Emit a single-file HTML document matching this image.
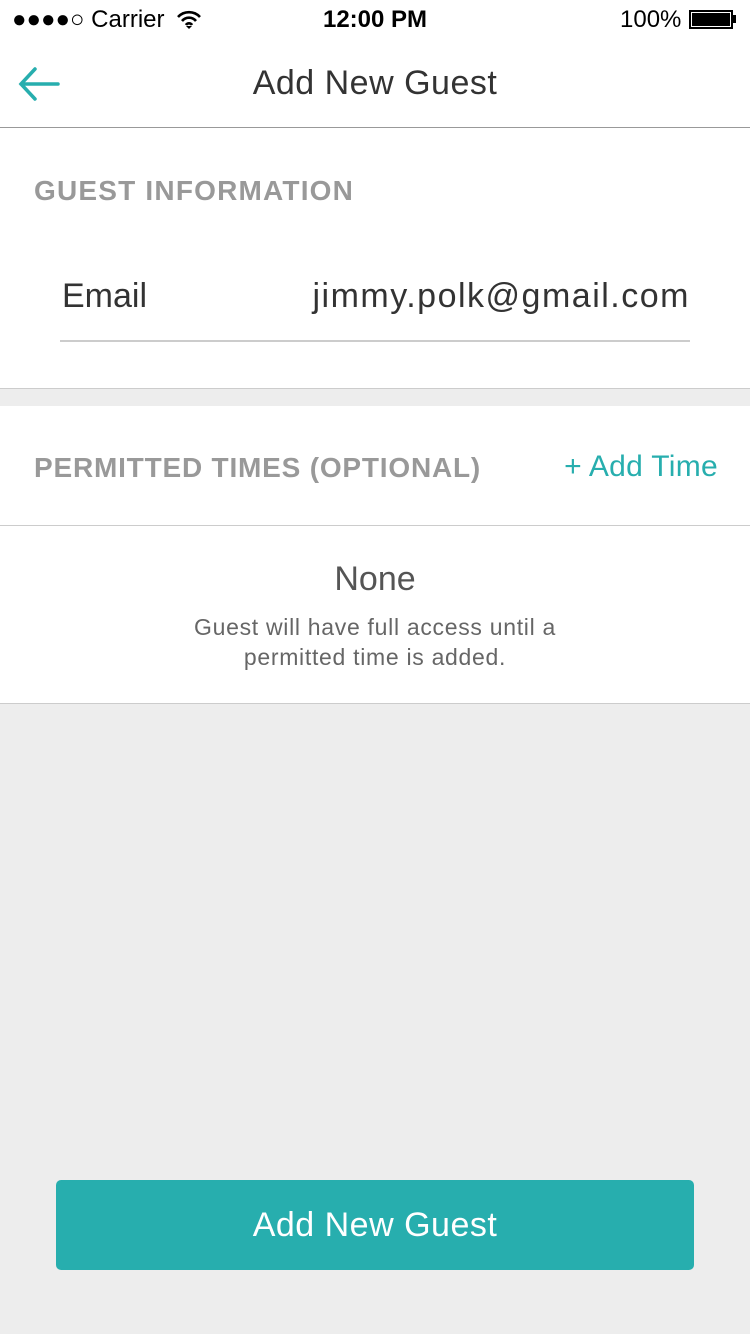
<!DOCTYPE html>
<html><head><meta charset="utf-8"><style>
body{margin:0;width:750px;height:1334px;background:#ededed;font-family:"Liberation Sans",sans-serif;position:relative;overflow:hidden}
.a{position:absolute}
</style></head><body>
<div class="a" style="left:0;top:0;width:750px;height:128px;background:#fff"></div>
<div class="a" style="left:12px;top:6px;font-size:24px;color:#000">●●●●○ Carrier</div>
<svg class="a" style="left:176px;top:10px" width="26" height="20" viewBox="0 0 26 20"><path d="M2 7a15 15 0 0 1 22 0M6 11a9 9 0 0 1 14 0M10 15a3.5 3.5 0 0 1 6 0" stroke="#000" stroke-width="2.6" fill="none"/><path d="M13 19l-3-3h6z"/></svg>
<div class="a" style="left:0;width:750px;top:6px;text-align:center;font-size:24px;font-weight:bold">12:00 PM</div>
<div class="a" style="left:620px;top:6px;font-size:24px">100%</div>
<div class="a" style="left:689px;top:10px;width:42px;height:17px;background:#000;border:1px solid #000;outline:1px solid #fff;outline-offset:-3px"></div>
<div class="a" style="left:733px;top:15px;width:3px;height:8px;background:#000"></div>
<svg class="a" style="left:18px;top:66px" width="42" height="36" viewBox="0 0 42 36"><path d="M40 18H3M17 3L3 18l14 15" stroke="#27aeae" stroke-width="3.5" fill="none" stroke-linecap="round"/></svg>
<div class="a" style="left:0;width:750px;top:64px;text-align:center;font-size:34px;color:#333;letter-spacing:0.5px">Add New Guest</div>
<div class="a" style="left:0;top:127px;width:750px;height:1px;background:#999"></div>
<div class="a" style="left:0;top:128px;width:750px;height:260px;background:#fff;border-bottom:1px solid #ccc"></div>
<div class="a" style="left:34px;top:175px;font-size:28px;font-weight:bold;color:#999;letter-spacing:1.2px">GUEST INFORMATION</div>
<div class="a" style="left:62px;top:277px;font-size:34px;color:#333">Email</div>
<div class="a" style="right:60px;top:277px;font-size:34px;color:#333;letter-spacing:1.5px">jimmy.polk@gmail.com</div>
<div class="a" style="left:60px;top:340px;width:630px;height:2px;background:#ccc"></div>
<div class="a" style="left:0;top:406px;width:750px;height:297px;background:#fff;border-bottom:1px solid #ccc"></div>
<div class="a" style="left:34px;top:452px;font-size:28px;font-weight:bold;color:#999;letter-spacing:0.8px">PERMITTED TIMES (OPTIONAL)</div>
<div class="a" style="right:32px;top:450px;font-size:30px;color:#27aeae;letter-spacing:0.3px">+ Add Time</div>
<div class="a" style="left:0;top:525px;width:750px;height:1px;background:#ccc"></div>
<div class="a" style="left:0;width:750px;top:560px;text-align:center;font-size:34px;color:#555">None</div>
<div class="a" style="left:0;width:750px;top:612px;text-align:center;font-size:23px;line-height:30px;color:#666;letter-spacing:0.7px">Guest will have full access until a<br>permitted time is added.</div>
<div class="a" style="left:56px;top:1180px;width:638px;height:90px;background:#27aeae;border-radius:5px;color:#fff;font-size:34px;text-align:center;line-height:90px;letter-spacing:0.5px">Add New Guest</div>
</body></html>
